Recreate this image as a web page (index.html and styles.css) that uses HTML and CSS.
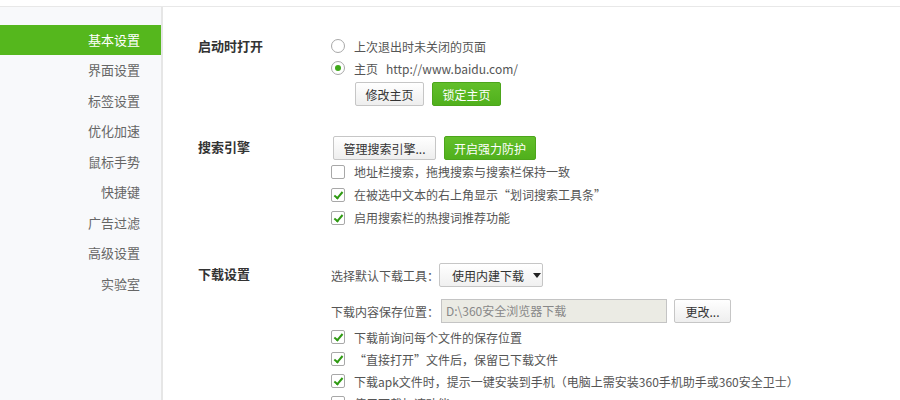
FILE: index.html
```html
<!DOCTYPE html>
<html lang="zh-CN">
    <head>
        <meta charset="UTF-8">
        <title>基本设置</title>
        <link rel="stylesheet" href="styles.css">
    </head>
    <body>
        <div class="topbar"></div>
        <div class="layout">
            <ul class="nav">
                <li class="nav-item active">基本设置</li>
                <li class="nav-item">界面设置</li>
                <li class="nav-item">标签设置</li>
                <li class="nav-item">优化加速</li>
                <li class="nav-item">鼠标手势</li>
                <li class="nav-item">快捷键</li>
                <li class="nav-item">广告过滤</li>
                <li class="nav-item">高级设置</li>
                <li class="nav-item">实验室</li>
            </ul>

            <div class="content">
                <!-- 启动时打开 -->
                <section class="group">
                    <div class="group-title">启动时打开</div>
                    <div class="group-body">
                        <div class="option"><span class="radio"></span>上次退出时未关闭的页面</div>
                        <div class="option"><span class="radio checked"></span>主页<span class="url">http://www.baidu.com/</span></div>
                        <div class="btn-row indent">
                            <button class="btn">修改主页</button>
                            <button class="btn btn-green">锁定主页</button>
                        </div>
                    </div>
                </section>

                <!-- 搜索引擎 -->
                <section class="group search">
                    <div class="group-title">搜索引擎</div>
                    <div class="group-body">
                        <div class="btn-row">
                            <button class="btn btn-wide">管理搜索引擎...</button>
                            <button class="btn btn-green btn-wide2">开启强力防护</button>
                        </div>
                        <div class="option tall"><span class="check"></span>地址栏搜索，拖拽搜索与搜索栏保持一致</div>
                        <div class="option tall"><span class="check checked"></span>在被选中文本的右上角显示“划词搜索工具条”</div>
                        <div class="option tall"><span class="check checked"></span>启用搜索栏的热搜词推荐功能</div>
                    </div>
                </section>

                <!-- 下载设置 -->
                <section class="group download">
                    <div class="group-title">下载设置</div>
                    <div class="group-body">
                        <div class="field">
                            <span class="field-label">选择默认下载工具：</span>
                            <div class="select">使用内建下载<span class="caret"></span></div>
                        </div>
                        <div class="field second">
                            <span class="field-label">下载内容保存位置：</span>
                            <div class="path">D:\360安全浏览器下载</div>
                            <button class="btn btn-small">更改...</button>
                        </div>
                        <div class="checks">
                            <div class="option"><span class="check checked"></span>下载前询问每个文件的保存位置</div>
                            <div class="option"><span class="check checked"></span>“直接打开”文件后，保留已下载文件</div>
                            <div class="option"><span class="check checked"></span>下载apk文件时，提示一键安装到手机（电脑上需安装360手机助手或360安全卫士）</div>
                            <div class="option"><span class="check"></span>使用下载加速功能</div>
                        </div>
                    </div>
                </section>
            </div>
        </div>
    </body>
</html>
```

FILE: styles.css
```css
body {
    margin: 0;
    font-family: "Noto Sans CJK SC", "Noto Sans", sans-serif;
    font-size: 12px;
    color: #555;
    background-color: #fff;
    overflow: hidden;
}
.topbar {
    height: 6px;
    border-bottom: 1px solid #e8e8e8;
}
.layout {
    display: flex;
    min-height: calc(100vh - 7px);
}

/* left menu */
.nav {
    list-style: none;
    margin: 0;
    padding: 18px 0 0 0;
    width: 161px;
    background-color: #f8f9fb;
    border-right: 2px solid #e6e6e6;
}
.nav-item {
    height: 30.5px;
    line-height: 30px;
    padding-right: 21px;
    text-align: right;
    font-size: 13px;
    color: #666;
}
.nav-item.active {
    height: 30px;
    background-color: #55b71d;
    color: #fff;
}

/* right side */
.content {
    flex: 1;
    padding: 28px 0 0 35px;
}
.group {
    display: grid;
    grid-template-columns: 133px 1fr;
}
.group.search {
    margin-top: 30px;
}
.group.download {
    margin-top: 34px;
}
.group-title {
    line-height: 22px;
    font-size: 13px;
    font-weight: bold;
    color: #333;
}
.option {
    display: flex;
    align-items: center;
    height: 22px;
    white-space: nowrap;
}
.option.tall {
    height: 23px;
}
.url {
    margin-left: 8px;
}

.radio,
.check {
    box-sizing: border-box;
    width: 14px;
    height: 14px;
    margin-right: 9px;
    border: 1px solid #a8a8a8;
    background-color: #fff;
    position: relative;
    flex: none;
}
.radio {
    border-radius: 50%;
}
.radio.checked::after {
    content: "";
    position: absolute;
    left: 3px;
    top: 3px;
    width: 6px;
    height: 6px;
    border-radius: 50%;
    background-color: #3fa81a;
}
.check {
    border-radius: 2px;
}
.check.checked::after {
    content: "";
    position: absolute;
    left: 4px;
    top: 1px;
    width: 3px;
    height: 7px;
    border: solid #2f9a12;
    border-width: 0 2px 2px 0;
    transform: rotate(40deg);
}

.btn-row {
    display: flex;
    gap: 8px;
}
.btn-row.indent {
    margin: 3px 0 0 24px;
}
.btn {
    box-sizing: border-box;
    height: 24px;
    width: 69px;
    padding: 0;
    font-family: inherit;
    font-size: 12px;
    color: #333;
    border: 1px solid #c6c6c6;
    border-radius: 2px;
    background: linear-gradient(#fff, #eeeeee);
    white-space: nowrap;
}
.btn-green {
    color: #fff;
    border-color: #4ca51b;
    background: linear-gradient(#62bf2a, #50b01c);
}
.btn-wide {
    width: 103px;
    margin-left: 2px;
}
.btn-wide2 {
    width: 92px;
}
.btn-small {
    width: 57px;
    margin-left: 7px;
}

.field {
    display: flex;
    align-items: center;
    height: 24px;
    white-space: nowrap;
}
.field.second {
    margin-top: 12px;
}
.field-label {
    width: 108px;
    flex: none;
}
.select {
    box-sizing: border-box;
    display: flex;
    align-items: center;
    flex: none;
    width: 104px;
    height: 24px;
    padding-left: 12px;
    color: #333;
    border: 1px solid #c6c6c6;
    border-radius: 2px;
    background: linear-gradient(#fff, #f0f0f0);
}
.caret {
    flex: none;
    margin-left: 9px;
    border-left: 4px solid transparent;
    border-right: 4px solid transparent;
    border-top: 5px solid #222;
}
.path {
    box-sizing: border-box;
    flex: none;
    width: 226px;
    height: 24px;
    margin-left: 2px;
    padding-left: 4px;
    line-height: 22px;
    color: #888;
    border: 1px solid #c4c4c4;
    background-color: #ebebe4;
}
.checks {
    margin-top: 3px;
}
```
